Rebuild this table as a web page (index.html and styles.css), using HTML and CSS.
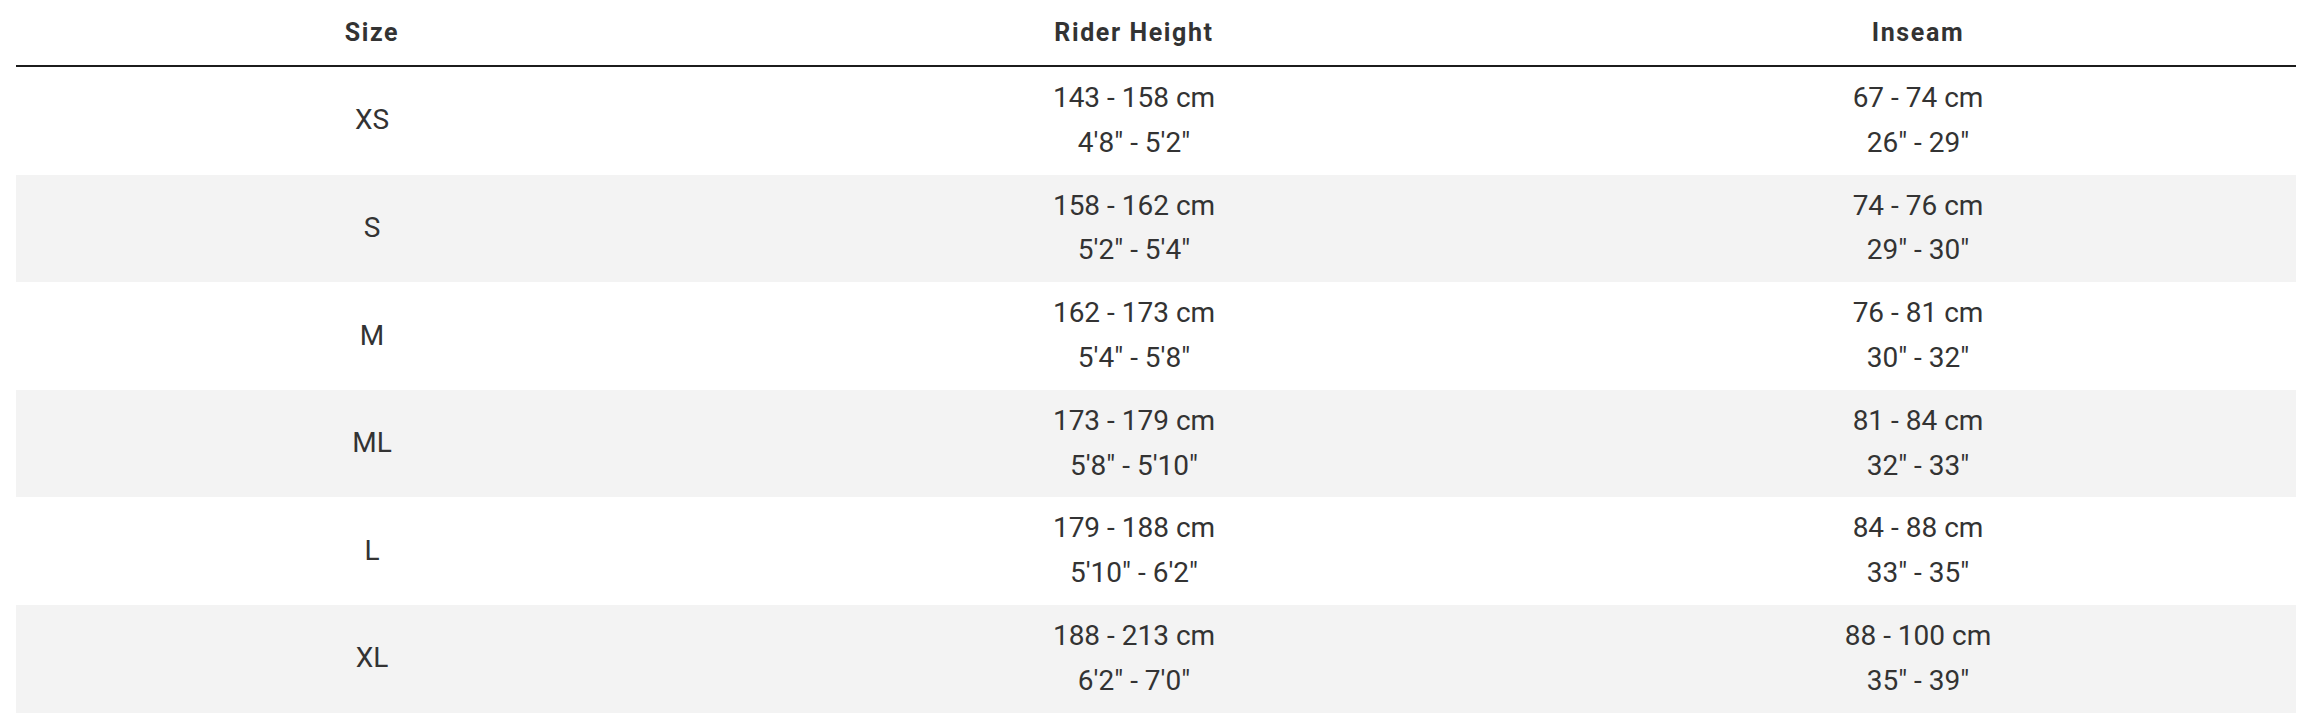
FILE: index.html
```html
<!DOCTYPE html>
<html lang="en">
<head>
<meta charset="utf-8">
<title>Size Chart</title>
<link rel="stylesheet" href="styles.css">
</head>
<body>
<div class="wrap">
  <table class="size-table">
    <colgroup>
      <col class="c-size">
      <col class="c-height">
      <col class="c-inseam">
    </colgroup>
    <thead>
      <tr><th>Size</th><th>Rider Height</th><th>Inseam</th></tr>
    </thead>
    <tbody>
      <tr><td>XS</td><td>143 - 158 cm<br>4'8" - 5'2"</td><td>67 - 74 cm<br>26" - 29"</td></tr>
      <tr><td>S</td><td>158 - 162 cm<br>5'2" - 5'4"</td><td>74 - 76 cm<br>29" - 30"</td></tr>
      <tr><td>M</td><td>162 - 173 cm<br>5'4" - 5'8"</td><td>76 - 81 cm<br>30" - 32"</td></tr>
      <tr><td>ML</td><td>173 - 179 cm<br>5'8" - 5'10"</td><td>81 - 84 cm<br>32" - 33"</td></tr>
      <tr><td>L</td><td>179 - 188 cm<br>5'10" - 6'2"</td><td>84 - 88 cm<br>33" - 35"</td></tr>
      <tr><td>XL</td><td>188 - 213 cm<br>6'2" - 7'0"</td><td>88 - 100 cm<br>35" - 39"</td></tr>
    </tbody>
  </table>
</div>
</body>
</html>
```

FILE: styles.css
```css
html, body {
  margin: 0;
  padding: 0;
  background: #ffffff;
}

.wrap {
  padding: 0 8px 0 16px;
}

.size-table {
  width: 2280px;
  border-collapse: collapse;
  table-layout: fixed;
  font-family: Roboto, "Liberation Sans", Arial, sans-serif;
  color: #333333;
}

.c-size { width: 712px; }
.c-height { width: 812px; }
.c-inseam { width: 756px; }

.size-table th {
  height: 65px;
  padding: 0;
  font-size: 25px;
  font-weight: 700;
  letter-spacing: 1.6px;
  text-align: center;
  vertical-align: middle;
  border-bottom: 2px solid #1c1c1c;
}

.size-table td {
  padding: 9px 0;
  font-size: 28px;
  line-height: 44.8px;
  text-align: center;
  vertical-align: middle;
}

.size-table tbody tr:nth-child(even) td {
  background: #f3f3f3;
}
```
